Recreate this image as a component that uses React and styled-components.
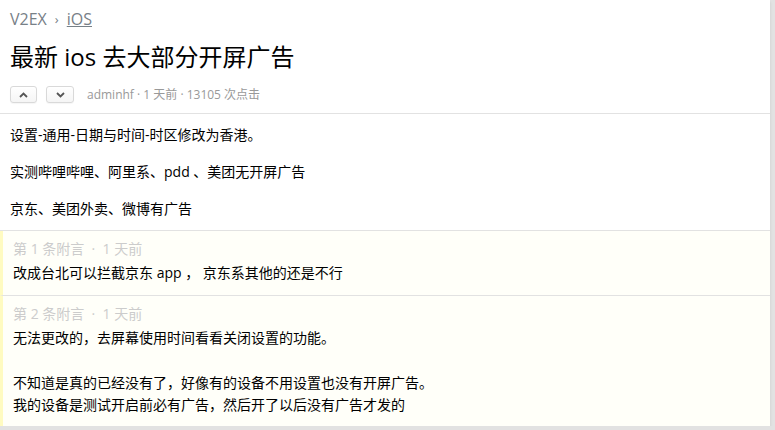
import React from "react";
import styled, { createGlobalStyle } from "styled-components";

const Global = createGlobalStyle`
  html, body { margin: 0; padding: 0; background: #e2e2e2; }
  body { font-family: "Open Sans", "Noto Sans CJK SC", sans-serif; color: #000; }
`;

const Box = styled.div`
  width: 770px;
  background: #fff;
  box-shadow: 0 2px 3px rgba(0, 0, 0, 0.1);
`;

const Header = styled.div`
  padding: 10px 10px 10px;
  border-bottom: 1px solid #e2e2e2;
`;

const Crumbs = styled.div`
  display: flex;
  align-items: center;
  gap: 8px;
  font-size: 16px;
  line-height: 18px;
  color: #778087;
`;

const CrumbLink = styled.a`
  color: #778087;
  text-decoration: ${(p) => (p.$underline ? "underline" : "none")};
`;

const Sep = styled.span`
  font-size: 13px;
  color: #778087;
`;

const Title = styled.h1`
  margin: 11px 0 11px;
  font-size: 24px;
  line-height: 36px;
  font-weight: 400;
  color: #000;
`;

const MetaRow = styled.div`
  display: flex;
  align-items: center;
  gap: 9px;
`;

const VoteButton = styled.button`
  width: ${(p) => p.$w}px;
  height: 17px;
  padding: 0;
  border: 1px solid #d9d9d9;
  border-radius: 3px;
  background: linear-gradient(#fff, #f5f5f5);
  display: flex;
  align-items: center;
  justify-content: center;
  box-shadow: 0 1px 1px rgba(0, 0, 0, 0.04);
`;

const Meta = styled.span`
  margin-left: 4px;
  font-size: 12px;
  line-height: 17px;
  color: #999;
`;

const Content = styled.div`
  padding: 10px;
  font-size: 14px;
  line-height: 22.4px;
  display: flex;
  flex-direction: column;
  gap: 14.6px;
  border-bottom: 1px solid #e2e2e2;
`;

const Para = styled.p`
  margin: 0;
`;

const Subtle = styled.div`
  background: #fffff9;
  border-left: 3px solid #fffbc1;
  padding: 10px;
  border-bottom: 1px solid #e2e2e2;
  &:last-child { border-bottom: none; }
`;

const SubtleHead = styled.div`
  font-size: 14px;
  line-height: 16px;
  color: #ccc;
  margin-bottom: 5px;
`;

const SubtleBody = styled.div`
  font-size: 14px;
  line-height: 22.4px;
  color: #000;
`;

const Chevron = ({ up }) => (
  <svg width="9" height="6" viewBox="0 0 9 6">
    <polyline
      points={up ? "1,5 4.5,1.5 8,5" : "1,1 4.5,4.5 8,1"}
      fill="none"
      stroke="#555"
      strokeWidth="1.8"
    />
  </svg>
);

export default function App() {
  return (
    <>
      <Global />
      <Box>
        <Header>
          <Crumbs>
            <CrumbLink>V2EX</CrumbLink>
            <Sep>›</Sep>
            <CrumbLink $underline>iOS</CrumbLink>
          </Crumbs>
          <Title>最新 ios 去大部分开屏广告</Title>
          <MetaRow>
            <VoteButton $w={27}>
              <Chevron up />
            </VoteButton>
            <VoteButton $w={28}>
              <Chevron />
            </VoteButton>
            <Meta>adminhf · 1 天前 · 13105 次点击</Meta>
          </MetaRow>
        </Header>
        <Content>
          <Para>设置-通用-日期与时间-时区修改为香港。</Para>
          <Para>实测哔哩哔哩、阿里系、pdd 、美团无开屏广告</Para>
          <Para>京东、美团外卖、微博有广告</Para>
        </Content>
        <Subtle>
          <SubtleHead>第 1 条附言 &nbsp;·&nbsp; 1 天前</SubtleHead>
          <SubtleBody>改成台北可以拦截京东 app ， 京东系其他的还是不行</SubtleBody>
        </Subtle>
        <Subtle>
          <SubtleHead>第 2 条附言 &nbsp;·&nbsp; 1 天前</SubtleHead>
          <SubtleBody>
            无法更改的，去屏幕使用时间看看关闭设置的功能。
            <br />
            <br />
            不知道是真的已经没有了，好像有的设备不用设置也没有开屏广告。
            <br />
            我的设备是测试开启前必有广告，然后开了以后没有广告才发的
          </SubtleBody>
        </Subtle>
      </Box>
    </>
  );
}
